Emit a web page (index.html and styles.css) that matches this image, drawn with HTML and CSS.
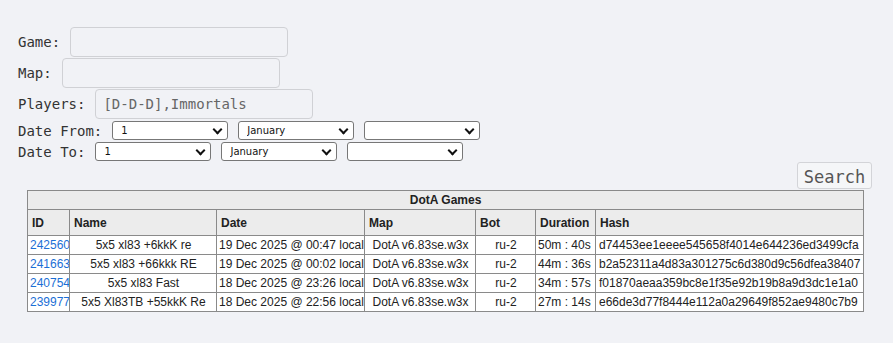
FILE: index.html
```html
<!DOCTYPE html>
<html lang="en">
<head>
    <meta charset="UTF-8">
    <title>DotA Games</title>
    <link rel="stylesheet" href="styles.css">
</head>
<body>
    <form class="search-form">
        <div class="form-row">
            <label for="game">Game:</label>
            <input type="text" id="game" class="text-input">
        </div>
        <div class="form-row">
            <label for="map">Map:</label>
            <input type="text" id="map" class="text-input">
        </div>
        <div class="form-row">
            <label for="players">Players:</label>
            <input type="text" id="players" class="text-input" value="[D-D-D],Immortals">
        </div>
        <div class="date-row">
            <label>Date From:</label>
            <span class="select-wrap"><select><option>1</option></select></span>
            <span class="select-wrap"><select><option>January</option></select></span>
            <span class="select-wrap"><select><option></option></select></span>
        </div>
        <div class="date-row">
            <label>Date To:</label>
            <span class="select-wrap"><select><option>1</option></select></span>
            <span class="select-wrap"><select><option>January</option></select></span>
            <span class="select-wrap"><select><option></option></select></span>
        </div>
        <div class="button-row">
            <button type="button" class="search-button">Search</button>
        </div>
    </form>

    <table class="games">
        <colgroup>
            <col style="width: 42px">
            <col style="width: 147px">
            <col style="width: 148px">
            <col style="width: 111px">
            <col style="width: 60px">
            <col style="width: 60px">
            <col style="width: 268px">
        </colgroup>
        <tr><th colspan="7" class="caption">DotA Games</th></tr>
        <tr class="head">
            <th>ID</th><th>Name</th><th>Date</th><th>Map</th><th>Bot</th><th>Duration</th><th>Hash</th>
        </tr>
        <tr>
            <td><a href="#">242560</a></td>
            <td class="center">5x5 xl83 +6kkK re</td>
            <td>19 Dec 2025 @ 00:47 local</td>
            <td class="center">DotA v6.83se.w3x</td>
            <td class="center">ru-2</td>
            <td>50m : 40s</td>
            <td class="hash">d74453ee1eeee545658f4014e644236ed3499cfa</td>
        </tr>
        <tr>
            <td><a href="#">241663</a></td>
            <td class="center">5x5 xl83 +66kkk RE</td>
            <td>19 Dec 2025 @ 00:02 local</td>
            <td class="center">DotA v6.83se.w3x</td>
            <td class="center">ru-2</td>
            <td>44m : 36s</td>
            <td class="hash">b2a52311a4d83a301275c6d380d9c56dfea38407</td>
        </tr>
        <tr>
            <td><a href="#">240754</a></td>
            <td class="center">5x5 xl83 Fast</td>
            <td>18 Dec 2025 @ 23:26 local</td>
            <td class="center">DotA v6.83se.w3x</td>
            <td class="center">ru-2</td>
            <td>34m : 57s</td>
            <td class="hash">f01870aeaa359bc8e1f35e92b19b8a9d3dc1e1a0</td>
        </tr>
        <tr>
            <td><a href="#">239977</a></td>
            <td class="center">5x5 Xl83TB +55kkK Re</td>
            <td>18 Dec 2025 @ 22:56 local</td>
            <td class="center">DotA v6.83se.w3x</td>
            <td class="center">ru-2</td>
            <td>27m : 14s</td>
            <td class="hash">e66de3d77f8444e112a0a29649f852ae9480c7b9</td>
        </tr>
    </table>
</body>
</html>
```

FILE: styles.css
```css
body {
    margin: 0;
    padding: 0;
    background-color: #f1f2f6;
    color: #333;
    font-family: "DejaVu Sans Mono", monospace;
}
.search-form {
    padding: 27px 0 0 18px;
}
.form-row {
    display: flex;
    align-items: center;
    gap: 10px;
    height: 30px;
    margin-bottom: 1px;
    font-size: 14px;
}
.text-input {
    box-sizing: border-box;
    width: 218px;
    height: 30px;
    padding: 0 7px;
    border: 1px solid #d0d1d5;
    border-radius: 4px;
    background-color: #f1f2f6;
    color: #666;
    font-family: "DejaVu Sans Mono", monospace;
    font-size: 14px;
}
.date-row {
    display: flex;
    align-items: center;
    height: 19px;
    margin-top: 2px;
    font-size: 14px;
}
.date-row label {
    margin-right: 10px;
}
.select-wrap {
    position: relative;
    display: inline-block;
    margin-right: 10px;
}
.select-wrap::after {
    content: "";
    position: absolute;
    right: 7px;
    top: 5px;
    width: 5px;
    height: 5px;
    border-right: 2px solid #111;
    border-bottom: 2px solid #111;
    transform: rotate(45deg);
    pointer-events: none;
}
.select-wrap select {
    box-sizing: border-box;
    appearance: none;
    width: 116px;
    height: 19px;
    padding: 0 0 0 8px;
    border: 1px solid #777;
    border-radius: 3px;
    background-color: #fff;
    color: #111;
    font-family: "DejaVu Sans", sans-serif;
    font-size: 10px;
}
.button-row {
    display: flex;
    justify-content: flex-end;
    padding-right: 21px;
    margin-top: 1px;
}
.search-button {
    box-sizing: border-box;
    width: 75px;
    height: 27px;
    padding: 2px 0 0;
    border: 1px solid #d3d4d8;
    border-radius: 3px;
    background-color: #f5f6f8;
    color: #555;
    font-family: "DejaVu Sans Mono", monospace;
    font-size: 17px;
    cursor: pointer;
}
.games {
    table-layout: fixed;
    width: 837px;
    margin: 1px 0 0 27px;
    border-collapse: collapse;
    background-color: #fff;
    font-family: "Liberation Sans", Arial, sans-serif;
    font-size: 12px;
    color: #222;
}
.games th,
.games td {
    border: 1px solid #8a8a8a;
    line-height: 14px;
    white-space: nowrap;
    overflow: hidden;
}
.games th {
    background-color: #ececec;
    text-align: left;
    padding: 6px 4px 5px;
}
.games th.caption {
    text-align: center;
    padding: 2px 4px;
}
.games td {
    padding: 2px 1px 2px 2px;
}
.games td.center {
    text-align: center;
}
.games td.hash {
    padding-left: 3px;
}
.games a {
    color: #1b6fd6;
    text-decoration: none;
}
```
